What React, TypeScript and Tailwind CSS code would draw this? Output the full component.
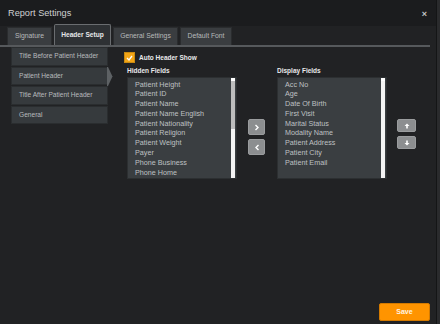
import React from "react";

const hidden = [
  "Patient Height",
  "Patient ID",
  "Patient Name",
  "Patient Name English",
  "Patient Nationality",
  "Patient Religion",
  "Patient Weight",
  "Payer",
  "Phone Business",
  "Phone Home",
];
const display = [
  "Acc No",
  "Age",
  "Date Of Birth",
  "First Visit",
  "Marital Status",
  "Modality Name",
  "Patient Address",
  "Patient City",
  "Patient Email",
];

function ListBox({ items, scrolled }: { items: string[]; scrolled: boolean }) {
  return (
    <div className="relative w-[110px] h-[102px] bg-[#3a3e41] border border-[#2c2f31]">
      <div className="pl-[7px] pt-[1.5px] text-[7.2px] leading-[9.8px] text-[#bfc1c3]">
        {items.map((t) => (
          <div key={t} className="whitespace-nowrap">{t}</div>
        ))}
      </div>
      <div className="absolute right-[1px] top-0 bottom-0 w-[4px] bg-[#f4f4f4] flex flex-col">
        <div className="h-[3px] bg-white" />
        {scrolled && <div className="h-[48px] bg-[#bdbdbd]" />}
      </div>
    </div>
  );
}

function SqBtn({ children, w = 17, h = 16 }: { children: React.ReactNode; w?: number; h?: number }) {
  return (
    <div
      className={`${w === 17 ? "w-[17px]" : "w-[19px]"} ${h === 16 ? "h-[16px]" : "h-[13px]"} rounded-[2px] bg-[#8c8e90] border border-[#9a9c9e] flex items-center justify-center`}
    >
      {children}
    </div>
  );
}

export default function App() {
  const font = { fontFamily: '"Liberation Sans", Arial, sans-serif' };
  return (
    <div className="w-[440px] h-[324px] flex bg-[#2a2b2d] overflow-hidden" style={font}>
      <div className="w-[437px] h-[324px] flex flex-col bg-[#212224] border-r border-[#141516]">
        {/* title bar */}
        <div className="h-[26px] bg-[#1b1c1e] flex items-center justify-between pl-[8px] pr-[9px] pt-[2px] shrink-0">
          <span className="text-[9.2px] text-[#cfd0d1]">Report Settings</span>
          <span className="text-[9px] font-bold text-[#c4c5c6] leading-none">×</span>
        </div>

        {/* tabs */}
        <div className="h-[21px] flex items-end pl-[7px] gap-[2px] border-b-2 border-[#56595c] mr-[6px] shrink-0">
          <div className="h-[18px] w-[45px] bg-[#3a3d40] border border-[#2a2c2e] border-b-0 flex items-center justify-center text-[6.8px] text-[#b8babb]">
            Signature
          </div>
          <div className="h-[21px] w-[57px] bg-[#2e3134] border border-[#6a6d70] border-b-0 rounded-t-[2px] flex items-center justify-center text-[6.6px] font-bold text-[#e6e7e8]">
            Header Setup
          </div>
          <div className="h-[18px] w-[65px] bg-[#3a3d40] border border-[#2a2c2e] border-b-0 flex items-center justify-center text-[6.8px] text-[#b8babb]">
            General Settings
          </div>
          <div className="h-[18px] w-[52px] bg-[#3a3d40] border border-[#2a2c2e] border-b-0 flex items-center justify-center text-[6.8px] text-[#b8babb]">
            Default Font
          </div>
        </div>

        {/* body */}
        <div className="flex-1 flex pl-[11px]">
          <div className="w-[97px] flex flex-col gap-[1px]">
            {["Title Before Patient Header", "Patient Header", "Title After Patient Header", "General"].map((t, i) => (
              <div
                key={t}
                className="relative h-[18.5px] bg-[#363a3d] border border-[#2a2d2f] flex items-center pl-[7px] text-[6.6px] text-[#b9bbbd]"
              >
                <span className="whitespace-nowrap">{t}</span>
                {i === 1 && (
                  <svg className="absolute -right-[6px] top-[-1px]" width="6" height="19" viewBox="0 0 6 19">
                    <path d="M0 0 L1 0 L5.5 9.5 L1 19 L0 19 Z" fill="#5d6164" />
                  </svg>
                )}
              </div>
            ))}
          </div>

          <div className="ml-[16px] flex flex-col">
            <div className="flex items-center mt-[5px] h-[11px]">
              <div className="w-[11px] h-[11px] bg-[#f2a516] border border-[#c98a12] flex items-center justify-center">
                <svg width="7" height="6" viewBox="0 0 7 6">
                  <path d="M1 3 L3 5 L6 1" stroke="#fff" strokeWidth="1.3" fill="none" />
                </svg>
              </div>
              <span className="ml-[4px] text-[6.5px] font-bold text-[#e8e9ea]">Auto Header Show</span>
            </div>

            <div className="flex mt-[2px] ml-[3px]">
              <div className="flex flex-col">
                <div className="h-[12px] flex items-center text-[6.5px] font-bold text-[#e8e9ea]">Hidden Fields</div>
                <ListBox items={hidden} scrolled />
              </div>
              <div className="flex flex-col gap-[4px] mt-[54px] ml-[11px]">
                <SqBtn>
                  <svg width="6" height="7" viewBox="0 0 6 7">
                    <path d="M1.5 1 L4 3.5 L1.5 6" stroke="#fff" strokeWidth="1.4" fill="none" />
                  </svg>
                </SqBtn>
                <SqBtn>
                  <svg width="6" height="7" viewBox="0 0 6 7">
                    <path d="M4.5 1 L2 3.5 L4.5 6" stroke="#fff" strokeWidth="1.4" fill="none" />
                  </svg>
                </SqBtn>
              </div>
              <div className="flex flex-col ml-[12px]">
                <div className="h-[12px] flex items-center text-[6.5px] font-bold text-[#e8e9ea]">Display Fields</div>
                <ListBox items={display} scrolled={false} />
              </div>
              <div className="flex flex-col gap-[4px] mt-[54px] ml-[10px]">
                <SqBtn w={19} h={13}>
                  <svg width="6" height="6" viewBox="0 0 6 6">
                    <path d="M3 0.5 L5.5 3 L3.8 3 L3.8 5.5 L2.2 5.5 L2.2 3 L0.5 3 Z" fill="#fff" />
                  </svg>
                </SqBtn>
                <SqBtn w={19} h={13}>
                  <svg width="6" height="6" viewBox="0 0 6 6">
                    <path d="M3 5.5 L5.5 3 L3.8 3 L3.8 0.5 L2.2 0.5 L2.2 3 L0.5 3 Z" fill="#fff" />
                  </svg>
                </SqBtn>
              </div>
            </div>
          </div>
        </div>

        {/* footer */}
        <div className="flex justify-end pr-[6px] pb-[3px] shrink-0">
          <div className="w-[51px] h-[18px] bg-[#ff9400] border border-[#d47a00] rounded-[2px] flex items-center justify-center text-[7px] font-bold text-[#fff3e0]">
            Save
          </div>
        </div>
      </div>
    </div>
  );
}
